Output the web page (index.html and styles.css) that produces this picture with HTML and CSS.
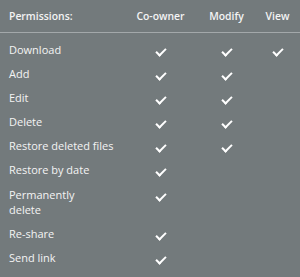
FILE: index.html
```html
<!DOCTYPE html>
<html>
<head>
<meta charset="utf-8">
<link rel="stylesheet" href="styles.css">
</head>
<body>
<div class="panel">
  <table class="perm">
    <thead>
      <tr>
        <th class="name">Permissions:</th>
        <th class="col c1">Co-owner</th>
        <th class="col c2">Modify</th>
        <th class="col c3">View</th>
      </tr>
    </thead>
    <tbody>
      <tr class="first"><td class="name">Download</td><td class="col"><i class="ck"></i></td><td class="col"><i class="ck"></i></td><td class="col"><i class="ck"></i></td></tr>
      <tr><td class="name">Add</td><td class="col"><i class="ck"></i></td><td class="col"><i class="ck"></i></td><td class="col"></td></tr>
      <tr><td class="name">Edit</td><td class="col"><i class="ck"></i></td><td class="col"><i class="ck"></i></td><td class="col"></td></tr>
      <tr><td class="name">Delete</td><td class="col"><i class="ck"></i></td><td class="col"><i class="ck"></i></td><td class="col"></td></tr>
      <tr><td class="name">Restore deleted files</td><td class="col"><i class="ck"></i></td><td class="col"><i class="ck"></i></td><td class="col"></td></tr>
      <tr><td class="name">Restore by date</td><td class="col"><i class="ck"></i></td><td class="col"></td><td class="col"></td></tr>
      <tr class="tall"><td class="name">Permanently<br>delete</td><td class="col"><i class="ck"></i></td><td class="col"></td><td class="col"></td></tr>
      <tr><td class="name">Re-share</td><td class="col"><i class="ck"></i></td><td class="col"></td><td class="col"></td></tr>
      <tr><td class="name">Send link</td><td class="col"><i class="ck"></i></td><td class="col"></td><td class="col"></td></tr>
    </tbody>
  </table>
</div>
</body>
</html>
```

FILE: styles.css
```css
html, body {
  margin: 0;
  padding: 0;
  background: #737a7c;
}
.panel {
  width: 300px;
  height: 277px;
  background: #737a7c;
  color: #f4f4f4;
  font-family: "Open Sans", "Noto Sans", sans-serif;
  font-size: 11px;
  overflow: hidden;
}
.perm {
  width: 300px;
  border-collapse: collapse;
  table-layout: fixed;
}
.perm th {
  font-weight: 600;
  font-size: 10.4px;
  height: 32px;
  padding: 0;
  line-height: 14px;
  vertical-align: middle;
  border-bottom: 1px solid #a3a8aa;
}
.perm th.name { text-align: left; padding-left: 9px; width: 114px; }
.perm th.c1 { width: 75px; }
.perm th.c2 { width: 57px; }
.perm th.c3 { width: 45px; }
.perm td {
  padding: 5px 0;
  line-height: 14px;
  vertical-align: top;
}
.perm td.name { padding-left: 9px; }
.perm tr.first td { padding-top: 10px; }
.perm tr.tall td { line-height: 15px; }
.perm .col { text-align: center; }
.ck {
  display: inline-block;
  width: 8px;
  height: 4px;
  border-left: 2px solid #ffffff;
  border-bottom: 2px solid #ffffff;
  transform: rotate(-45deg);
  margin-top: 1px;
}
```
